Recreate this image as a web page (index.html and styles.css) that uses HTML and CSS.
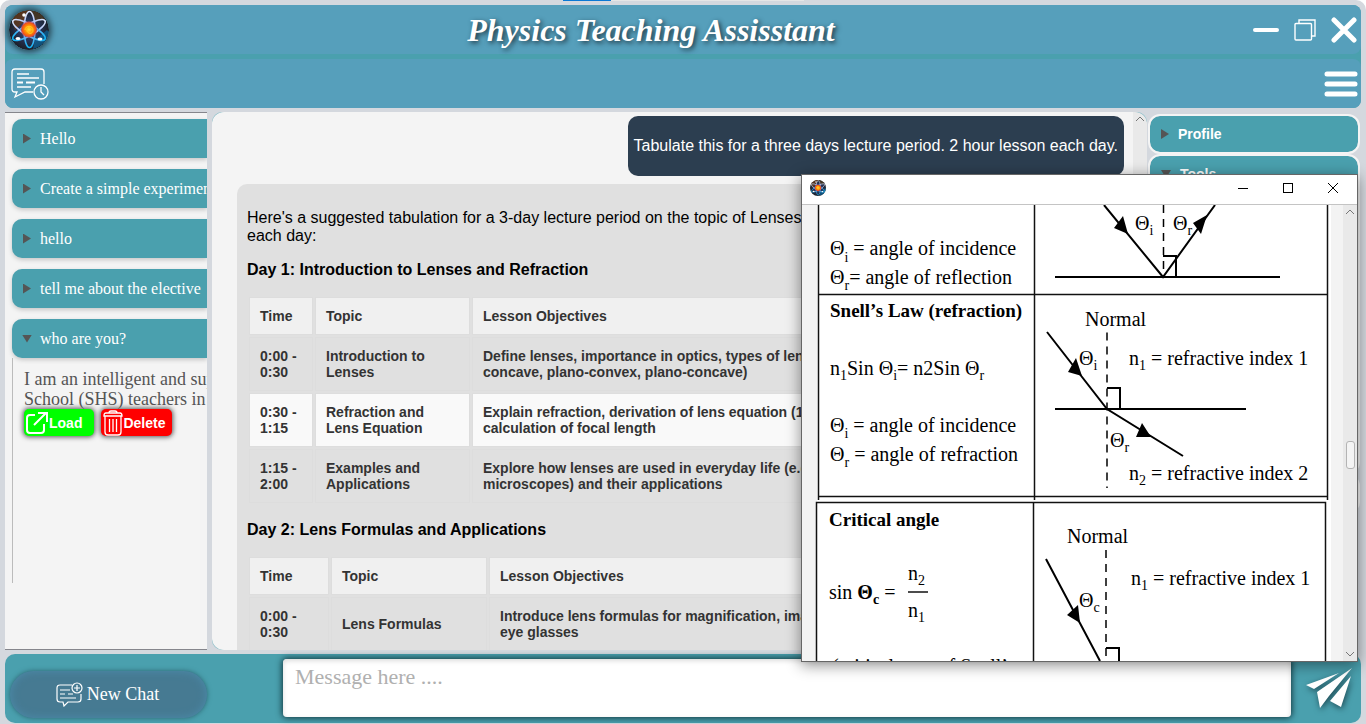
FILE: index.html
```html
<!DOCTYPE html>
<html lang="en">
<head>
<meta charset="utf-8">
<title>Physics Teaching Assisstant</title>
<link rel="stylesheet" href="styles.css">
</head>
<body>
<svg class="defs" width="0" height="0" aria-hidden="true">
  <defs>
    <radialGradient id="disc"><stop offset="0" stop-color="#7a4a52"/><stop offset=".5" stop-color="#27365c"/><stop offset="1" stop-color="#1b1f27"/></radialGradient>
    <radialGradient id="core"><stop offset="0" stop-color="#ffe23a"/><stop offset=".45" stop-color="#ff9500"/><stop offset=".8" stop-color="#f0521c"/><stop offset="1" stop-color="#c04880" stop-opacity=".3"/></radialGradient>
    <linearGradient id="orbit" x1="0" y1="0" x2="0" y2="1"><stop offset="0" stop-color="#d8e4ff"/><stop offset=".45" stop-color="#9ab4f5"/><stop offset="1" stop-color="#12b4f5"/></linearGradient>
    <symbol id="atom" viewBox="0 0 40 40">
      <circle cx="20" cy="20" r="20" fill="url(#disc)"/>
      <path d="M3 10A20 20 0 0 1 20 0L16 11 6 20Z" fill="#6b3a16" opacity=".7"/>
      <path d="M20 0A20 20 0 0 1 36 9L27 12Z" fill="#4c3a22" opacity=".8"/>
      <path d="M40 22A20 20 0 0 1 24 39L26 30 38 20Z" fill="#0878b8" opacity=".55"/>
      <g fill="none" stroke="url(#orbit)" stroke-width="1.6">
        <ellipse cx="20.500" cy="19.500" rx="5.500" ry="18"/>
        <ellipse cx="20" cy="20" rx="5.500" ry="18.500" transform="rotate(60 20 20)"/>
        <ellipse cx="20" cy="20" rx="5.500" ry="18.500" transform="rotate(-60 20 20)"/>
      </g>
      <circle cx="20" cy="19.500" r="8.500" fill="url(#core)"/>
      <path d="M16 20c0-5 8-5 8 0s-6 4-6 0 4-2 4 0" fill="none" stroke="#ffc928"/>
      <g fill="#fff"><circle cx="15" cy="5" r="1.800"/><ellipse cx="9" cy="28.500" rx="2.500" ry="1.500"/><ellipse cx="31" cy="29" rx="2.500" ry="1.500"/></g>
    </symbol>
  </defs>
</svg>

<div class="app">
  <div class="drag-tab" aria-hidden="true"></div>

  <header class="header">
    <div class="titlebar">
      <svg class="logo"><use href="#atom"/></svg>
      <h1 class="title">Physics Teaching Assisstant</h1>
      <div class="window-controls">
        <button class="icon-btn" aria-label="Minimize"><svg width="26" height="26" viewBox="0 0 26 26"><path d="M2 13h22" stroke="#fff" stroke-width="4" stroke-linecap="round"/></svg></button>
        <button class="icon-btn" aria-label="Restore"><svg width="22" height="22" viewBox="0 0 22 22" fill="none" stroke="#fff" stroke-width="1.400"><rect x="1" y="4.500" width="16.500" height="16.500" rx="1"/><path d="M5 4.500V1h16v16h-3.500"/></svg></button>
        <button class="icon-btn" aria-label="Close"><svg width="26" height="26" viewBox="0 0 26 26"><path d="M3 3l20 20M23 3L3 23" stroke="#fff" stroke-width="5" stroke-linecap="round"/></svg></button>
      </div>
    </div>
    <div class="toolbar">
      <button class="icon-btn" aria-label="Chat history"><svg width="38" height="32" viewBox="0 0 38 32" fill="none" stroke="#fff" stroke-width="1.300">
        <path d="M22 24H14L4 29l2-5H4Q1 24 1 21V4Q1 1 4 1h26q3 0 3 3v12"/>
        <path d="M6 6h12M6 10h22M6 19h14"/><path d="M6 14.500h6M15 14.500h9" stroke-width="2"/>
        <circle cx="30" cy="24" r="7"/><path d="M30 19v5l3 3"/></svg></button>
      <button class="icon-btn" aria-label="Menu"><svg width="34" height="28" viewBox="0 0 34 28"><path d="M3 4h28M3 14h28M3 24h28" stroke="#fff" stroke-width="5" stroke-linecap="round"/></svg></button>
    </div>
  </header>

  <main class="main">
    <aside class="history">
      <details class="chat-item"><summary>Hello</summary></details>
      <details class="chat-item"><summary>Create a simple experiment</summary></details>
      <details class="chat-item"><summary>hello</summary></details>
      <details class="chat-item"><summary>tell me about the elective</summary></details>
      <details class="chat-item" open>
        <summary>who are you?</summary>
        <div class="chat-body">
          <p>I am an intelligent and supportive<br>School (SHS) teachers in Ghana</p>
          <div class="chat-actions">
            <button class="pill load"><svg width="24" height="24" viewBox="0 0 24 24" fill="none" stroke="#fff" stroke-width="2"><path d="M10 4H5Q2 4 2 7v12q0 3 3 3h11q3 0 3-3v-6"/><path d="M9 14L21 2M13 2h9v9"/></svg>Load</button>
            <button class="pill delete"><svg width="20" height="26" viewBox="0 0 20 26" fill="none" stroke="#fff" stroke-width="1.300"><path d="M6 3q0-2 2-2h4q2 0 2 2M3 3h14q2 0 2 3H1q0-3 2-3zM2 6v16q0 3 3 3h10q3 0 3-3V6M6.500 9v13M10 9v13M13.500 9v13"/></svg>Delete</button>
          </div>
        </div>
      </details>
    </aside>

    <section class="chat">
      <div class="messages">
        <p class="msg-user">Tabulate this for a three days lecture period. 2 hour lesson each day.</p>
        <article class="msg-bot">
          <p>Here's a suggested tabulation for a 3-day lecture period on the topic of Lenses, 2 hours<br>each day:</p>
          <h2>Day 1: Introduction to Lenses and Refraction</h2>
          <table>
            <colgroup><col class="time-a"><col class="topic"><col></colgroup>
            <thead><tr><th>Time</th><th>Topic</th><th>Lesson Objectives</th></tr></thead>
            <tbody>
              <tr><td>0:00 -<br>0:30</td><td>Introduction to<br>Lenses</td><td>Define lenses, importance in optics, types of lenses (convex,<br>concave, plano-convex, plano-concave)</td></tr>
              <tr><td>0:30 -<br>1:15</td><td>Refraction and<br>Lens Equation</td><td>Explain refraction, derivation of lens equation (1/f = 1/u + 1/v),<br>calculation of focal length</td></tr>
              <tr><td>1:15 -<br>2:00</td><td>Examples and<br>Applications</td><td>Explore how lenses are used in everyday life (e.g. cameras,<br>microscopes) and their applications</td></tr>
            </tbody>
          </table>
          <h2>Day 2: Lens Formulas and Applications</h2>
          <table>
            <colgroup><col class="time-b"><col class="topic-b"><col></colgroup>
            <thead><tr><th>Time</th><th>Topic</th><th>Lesson Objectives</th></tr></thead>
            <tbody>
              <tr><td>0:00 -<br>0:30</td><td>Lens Formulas</td><td>Introduce lens formulas for magnification, image distance,<br>eye glasses</td></tr>
            </tbody>
          </table>
        </article>
      </div>
      <div class="scrollbar" aria-hidden="true"><svg width="10" height="8" viewBox="0 0 10 8" fill="none" stroke="#777"><path d="M1 6l4-4 4 4"/></svg></div>
    </section>

    <aside class="panel">
      <details class="panel-item"><summary>Profile</summary></details>
      <details class="panel-item tools" open><summary>Tools</summary><div class="panel-body"></div></details>
      <details class="panel-item"><summary>Settings</summary></details>
    </aside>
  </main>

  <footer class="footer">
    <div class="footer-side">
      <button class="new-chat"><svg width="27" height="25" viewBox="0 0 27 25" fill="none" stroke="#fff" stroke-width="1.200"><path d="M16 3H4Q1 3 1 6v11q0 3 3 3h3l1 4 4-4h10q3 0 3-3v-5M4 8h10M4 12h5M12 12h5M4 16h16"/><circle cx="21" cy="6" r="5"/><path d="M21 3v6M18 6h6"/></svg>New Chat</button>
    </div>
    <textarea class="composer" aria-label="Message" placeholder="Message here ...."></textarea>
    <button class="icon-btn send" aria-label="Send"><svg width="48" height="42" viewBox="0 0 48 42" fill="#fff"><path d="M1 18L34 6 9 22zM47 1L12 25l3 16L24 29zM46 9L25 34l11 6z"/></svg></button>
  </footer>
</div>

<section class="dialog" role="dialog" aria-label="Formula viewer">
  <div class="dialog-bar">
    <svg class="dialog-logo"><use href="#atom"/></svg>
    <div class="dialog-controls">
      <button class="icon-btn" aria-label="Minimize"><svg width="12" height="12" viewBox="0 0 12 12"><path d="M1 6.500h10" stroke="#000"/></svg></button>
      <button class="icon-btn" aria-label="Maximize"><svg width="12" height="12" viewBox="0 0 12 12"><rect x="1.500" y="1.500" width="9" height="9" fill="none" stroke="#000"/></svg></button>
      <button class="icon-btn" aria-label="Close"><svg width="12" height="12" viewBox="0 0 12 12"><path d="M1 1l10 10M11 1L1 11" stroke="#000"/></svg></button>
    </div>
  </div>
  <div class="dialog-client">
    <svg class="figure" viewBox="815 205 528 456" preserveAspectRatio="xMinYMin slice">
      <path class="paper" d="M817 205h514v456h-514z"/>
      <g class="rules">
        <path d="M818.500 205V500M1034.500 205V500M1327.500 205V500M818 294.500h510M818 496.500h510"/>
        <path d="M816.500 661V502.500H1325.500V661M1033.500 502V661"/>
      </g>
      <g class="rays">
        <path d="M1055 277H1280M1104 205L1163 277L1215 205M1163 256h13v21"/>
        <path d="M1055 409H1246M1047 332L1107 409L1183 456M1107 388h13v21"/>
        <path d="M1046 559L1100 661M1106 648h13v13"/>
      </g>
      <g class="normals">
        <path d="M1163.500 205V277"/><path d="M1107 332.500V488"/><path d="M1106 550V661"/>
      </g>
      <g class="heads">
        <path d="M1128 234l-14-6 9-12zM1207 215l-14 8 8 11zM1082 376l-14-4 8-14zM1151 437h-15l6-14zM1080 623l-13-8 11-10z"/>
      </g>
      <g class="label">
        <text x="830" y="255">Θ<tspan class="sub" dy="7">i</tspan><tspan dy="-7"> = angle of incidence</tspan></text>
        <text x="830" y="284">Θ<tspan class="sub" dy="6">r</tspan><tspan dy="-6">= angle of reflection</tspan></text>
        <text class="heading" x="830" y="317">Snell’s Law (refraction)</text>
        <text x="830" y="375">n<tspan class="sub" dy="5">1</tspan><tspan dy="-5">Sin Θ</tspan><tspan class="sub" dy="5">i</tspan><tspan dy="-5">= n2Sin Θ</tspan><tspan class="sub" dy="5">r</tspan></text>
        <text x="830" y="432">Θ<tspan class="sub" dy="6">i</tspan><tspan dy="-6"> = angle of incidence</tspan></text>
        <text x="830" y="461">Θ<tspan class="sub" dy="6">r</tspan><tspan dy="-6"> = angle of refraction</tspan></text>
        <text class="heading" x="829" y="526">Critical angle</text>
        <text x="829" y="599">sin <tspan class="strong">Θ</tspan><tspan class="sub strong" dy="5">c</tspan><tspan dy="-5"> =</tspan></text>
        <text x="908" y="580">n<tspan class="sub" dy="5">2</tspan></text>
        <text x="908" y="617">n<tspan class="sub" dy="5">1</tspan></text>
        <text x="832" y="673">(critical case of Snell’s</text>
        <text x="1135" y="230">Θ<tspan class="sub" dy="5">i</tspan></text>
        <text x="1173" y="230">Θ<tspan class="sub" dy="5">r</tspan></text>
        <text x="1085" y="326">Normal</text>
        <text x="1079" y="365">Θ<tspan class="sub" dy="5">i</tspan></text>
        <text x="1129" y="365">n<tspan class="sub" dy="5">1</tspan><tspan dy="-5"> = refractive index 1</tspan></text>
        <text x="1110" y="447">Θ<tspan class="sub" dy="5">r</tspan></text>
        <text x="1129" y="480">n<tspan class="sub" dy="5">2</tspan><tspan dy="-5"> = refractive index 2</tspan></text>
        <text x="1067" y="543">Normal</text>
        <text x="1131" y="585">n<tspan class="sub" dy="5">1</tspan><tspan dy="-5"> = refractive index 1</tspan></text>
        <text x="1079" y="607">Θ<tspan class="sub" dy="5">c</tspan></text>
      </g>
      <path class="bar" d="M908 592h20"/>
    </svg>
    <div class="scrollbar dialog-scroll" aria-hidden="true">
      <svg width="10" height="8" viewBox="0 0 10 8" fill="none" stroke="#777"><path d="M1 6l4-4 4 4"/></svg>
      <div class="thumb"></div>
      <svg width="10" height="8" viewBox="0 0 10 8" fill="none" stroke="#777"><path d="M1 2l4 4 4-4"/></svg>
    </div>
  </div>
</section>
</body>
</html>
```

FILE: styles.css
```css
* { box-sizing: border-box; }

body {
  margin: 0;
  background: #fff;
  font-family: "Liberation Sans", Arial, sans-serif;
  font-size: 16px;
}

p, h1, h2 { margin: 0; }
button { font: inherit; cursor: pointer; }
svg { display: block; flex: none; }
.defs { position: absolute; }

.app {
  position: relative;
  display: flex;
  flex-direction: column;
  gap: 4px;
  height: 100vh;
  padding: 5px 5px 1px;
  background: #d4d8de;
  border-radius: 10px 10px 0 0;
  overflow: hidden;
}

.drag-tab {
  position: absolute;
  top: 0;
  left: 563px;
  width: 241px;
  height: 1px;
  background: linear-gradient(90deg, #0a78d4 48px, #e6e6e6 48px);
}

.icon-btn {
  display: flex;
  padding: 0;
  border: 0;
  background: none;
}

/* Header */
.header {
  display: flex;
  flex-direction: column;
  gap: 5px;
  background: #4aa0ae;
  border-radius: 8px;
}

.titlebar, .toolbar {
  display: flex;
  align-items: center;
  justify-content: space-between;
  height: 49px;
  padding: 0 4px;
  background: #569fbb;
  border-radius: 8px;
}

.toolbar { padding: 0 3px 0 6px; }

.logo {
  width: 40px;
  height: 40px;
  border-radius: 50%;
  box-shadow: 0 0 6px 2px #24404c;
}

.title {
  flex: 1;
  font: italic bold 32px/48px "Liberation Serif", "Times New Roman", serif;
  color: #fff;
  text-align: center;
  text-shadow: 2px 2px 5px #1c3440;
}

.window-controls {
  display: flex;
  align-items: center;
  gap: 15px;
}

/* Columns */
.main {
  display: flex;
  flex: 1;
  min-height: 0;
}

.history {
  flex: none;
  width: 202px;
  margin-right: 5px;
  padding: 6px 0 0 7px;
  background: #f4f4f4;
  border-top: 1px solid #85868c;
  border-bottom: 1px solid #85868c;
  overflow: hidden;
  white-space: nowrap;
  font-family: "Liberation Serif", "Times New Roman", serif;
}

.chat-item { margin-bottom: 11px; }

summary {
  display: flex;
  align-items: center;
  background: #4aa0ae;
  color: #fff;
  list-style: none;
}

summary::before {
  content: "";
  flex: none;
  width: 8px;
  height: 10px;
  background: #555;
  clip-path: polygon(0 0, 100% 50%, 0 100%);
}

details[open] > summary::before {
  width: 10px;
  height: 8px;
  clip-path: polygon(0 0, 100% 0, 50% 100%);
}

.chat-item summary {
  gap: 9px;
  height: 39px;
  padding-left: 11px;
  border-radius: 10px 0 0 10px;
  box-shadow: 0 2px 4px #c8c8c8;
}

.chat-item[open] summary { gap: 8px; padding-left: 10px; }

.chat-body {
  height: 225px;
  padding: 11px 0 0 11px;
  border-left: 1px solid #bbb;
  color: #555;
  font-size: 18px;
  line-height: 20px;
}

.chat-actions { display: flex; gap: 7px; }

.pill {
  display: flex;
  align-items: center;
  height: 27px;
  border: 0;
  border-radius: 5px;
  box-shadow: 0 0 5px 1px #555;
  color: #fff;
  font: bold 14px/16px "Liberation Sans", Arial, sans-serif;
}

.load { padding: 0 12px 0 1px; background: #0f0; }
.delete { padding: 0 7px 0 2px; background: #f00; }

/* Conversation */
.chat {
  display: flex;
  flex: 1;
  min-width: 0;
  background: #8cc0ca;
  border-radius: 10px;
  overflow: hidden;
}

.messages {
  display: flex;
  flex: 1;
  flex-direction: column;
  gap: 8px;
  min-width: 0;
  padding: 4px 9px 0 25px;
  background: #f4f4f4;
  border-radius: 12px 0 0 12px;
  overflow: hidden;
}

.msg-user {
  align-self: flex-end;
  flex: none;
  padding: 20px 6px;
  border-radius: 10px;
  background: #2c3e50;
  color: #fff;
  line-height: 20px;
}

.msg-bot {
  display: flex;
  flex: none;
  flex-direction: column;
  gap: 16px;
  padding: 25px 10px;
  border-radius: 10px;
  background: #e0e0e0;
  color: #000;
  line-height: 18px;
  white-space: nowrap;
}

.msg-bot h2 { font-size: 16px; line-height: 18px; }

table {
  width: 100%;
  table-layout: fixed;
  border-spacing: 2px;
  color: #333;
  font-size: 14px;
  font-weight: bold;
  line-height: 16px;
}

th, td {
  padding: 10px;
  border: 1px solid #ddd;
  text-align: left;
}

th { background: #f0f0f0; }
tbody tr:nth-child(even) { background: #f9f9f9; }
.time-a { width: 64px; }
.time-b { width: 80px; }
.topic { width: 155px; }
.topic-b { width: 156px; }

.scrollbar {
  display: flex;
  flex: none;
  flex-direction: column;
  align-items: center;
  width: 14px;
  padding: 3px 0;
  background: #e9e9e9;
}

.chat .scrollbar { border-radius: 0 12px 12px 0; }

/* Right panel */
.panel {
  display: flex;
  flex: none;
  flex-direction: column;
  width: 214px;
  padding: 2px 1px 0 1px;
  font-weight: bold;
  font-size: 14px;
}

.panel-item {
  border: 2px solid #f4f4f4;
  border-radius: 12px;
  overflow: hidden;
}

.panel-item summary {
  gap: 9px;
  height: 36px;
  padding-left: 11px;
  border-radius: 10px;
}

.tools { height: 320px; }
.panel-body { background: #f4f4f4; height: 280px; }

/* Footer */
.footer {
  display: flex;
  align-items: center;
  height: 69px;
  padding: 5px 8px 6px 5px;
  background: #4aa0ae;
  border-radius: 10px;
}

.footer-side {
  flex: none;
  width: 273px;
  padding: 12px 76px 0 0;
}

.new-chat {
  display: flex;
  align-items: center;
  justify-content: center;
  gap: 4px;
  width: 100%;
  height: 47px;
  padding: 0 8px 0 6px;
  border: 0;
  border-radius: 24px;
  background: #467a92;
  box-shadow: 0 0 5px #2c6470, inset 0 0 8px #4c8cac;
  color: #fff;
  font: 18px/20px "Liberation Serif", "Times New Roman", serif;
}

.composer {
  flex: 1;
  min-width: 0;
  height: 58px;
  padding: 5px 12px;
  border: 0;
  border-radius: 4px;
  background: #fff;
  box-shadow: 0 0 6px 1px #12363e, inset 0 2px 5px #ddd;
  font: 22px/26px "Liberation Serif", "Times New Roman", serif;
  resize: none;
}

.composer::placeholder { color: #b0b0b0; }
.send { margin-left: 14px; filter: drop-shadow(1px 2px 3px #1c4650); }

/* Floating viewer window */
.dialog {
  position: absolute;
  right: 8px;
  top: 174px;
  display: flex;
  flex-direction: column;
  width: 557px;
  height: 488px;
  border: 1px solid #666;
  background: #fff;
  box-shadow: 0 3px 14px #00000073;
}

.dialog-bar {
  display: flex;
  align-items: center;
  justify-content: space-between;
  height: 30px;
  padding: 0 18px 4px 8px;
  border-bottom: 1px solid #c4c4c4;
}

.dialog-logo { width: 16px; height: 16px; }
.dialog-controls { display: flex; gap: 33px; }

.dialog-client {
  display: flex;
  flex: 1;
  min-height: 0;
  padding-left: 13px;
  background: #f3f3f3;
}

.figure { flex: 1; min-width: 0; height: 100%; }
.dialog-scroll { justify-content: space-between; }

.thumb {
  width: 9px;
  height: 28px;
  margin-top: 44px;
  border: 1px solid #b4b4b4;
  border-radius: 3px;
  background: #f4f4f4;
}

.paper { fill: #fff; }
.rules, .bar { fill: none; stroke: #111; stroke-width: 1.5; }
.rays { fill: none; stroke: #000; stroke-width: 2; }
.normals { fill: none; stroke: #000; stroke-width: 1.5; stroke-dasharray: 8 6; }
.heads { fill: #000; }
.label { font: 20px "Liberation Serif", "Times New Roman", serif; fill: #000; }
.heading { font-size: 19px; font-weight: bold; }
.strong { font-weight: bold; }
.sub { font-size: 14px; }
```
